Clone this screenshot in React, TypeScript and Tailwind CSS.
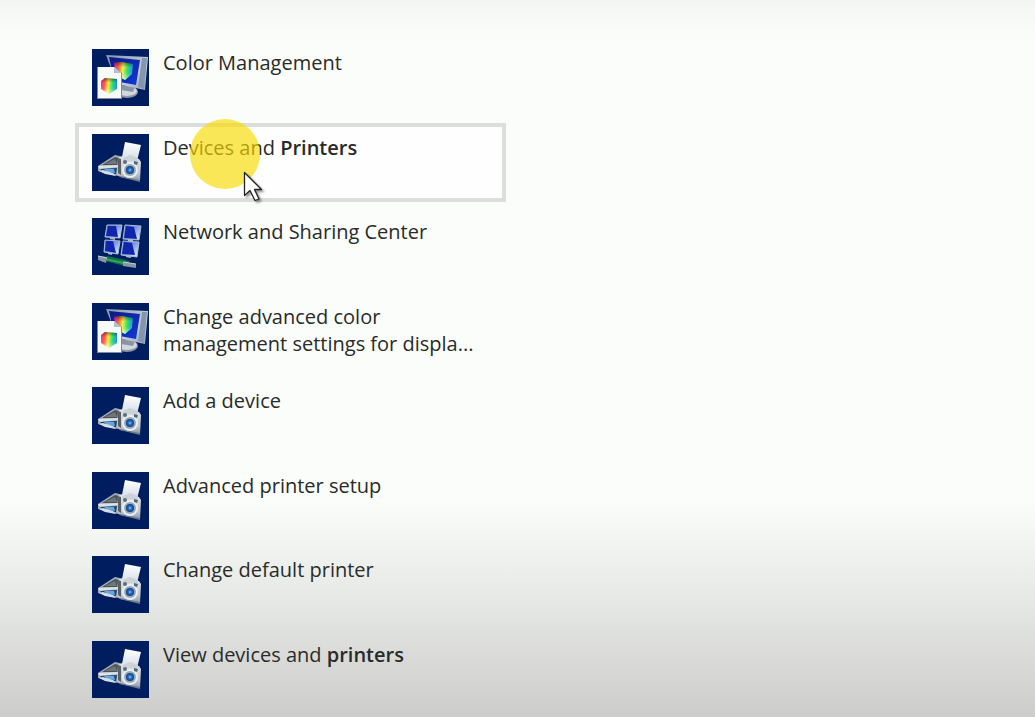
import { useState, type ReactNode } from 'react';

function ColorIcon() {
  return (
    <svg viewBox="0 0 57 57" className="w-[57px] h-[57px] shrink-0" aria-hidden="true">
      <defs>
        <linearGradient id="hue" x1="0" y1="0.4" x2="1" y2="0.5">
          <stop offset="0" stopColor="#f02fb8" />
          <stop offset="0.2" stopColor="#ff5a3c" />
          <stop offset="0.45" stopColor="#fff04a" />
          <stop offset="0.7" stopColor="#2fe36a" />
          <stop offset="1" stopColor="#1590ff" />
        </linearGradient>
        <linearGradient id="cubeLight" x1="0" y1="0" x2="0" y2="1">
          <stop offset="0" stopColor="#000" stopOpacity="0.45" />
          <stop offset="0.3" stopColor="#000" stopOpacity="0" />
          <stop offset="0.7" stopColor="#fff" stopOpacity="0.1" />
          <stop offset="1" stopColor="#fff" stopOpacity="0.6" />
        </linearGradient>
        <linearGradient id="colorScreen" x1="0" y1="0" x2="1" y2="1">
          <stop offset="0" stopColor="#0a1a7c" />
          <stop offset="1" stopColor="#1238dd" />
        </linearGradient>
        <linearGradient id="bezel" x1="0" y1="0" x2="1" y2="1">
          <stop offset="0" stopColor="#7f93b0" />
          <stop offset="0.6" stopColor="#c5cfdc" />
          <stop offset="1" stopColor="#9aa7b9" />
        </linearGradient>
      </defs>
      <rect width="57" height="57" fill="#001d60" />
      <ellipse cx="35" cy="43" rx="11" ry="6" fill="#8b97a6" />
      <ellipse cx="35" cy="42" rx="10" ry="5" fill="#d3d8de" />
      <path d="M29 36l14 2-2 5-12-2z" fill="#8995a7" />
      <path d="M14 6l42 2-3 33-28-6z" fill="url(#bezel)" />
      <path d="M50 9l5 0-3 31-6-2z" fill="#8696ac" />
      <path d="M17 8l31 3-4 25-22-4z" fill="url(#colorScreen)" />
      <path d="M22 14l7-1 12 2-1 10-7 6-9-5z" fill="url(#hue)" />
      <path d="M22 14l7-1 12 2-1 10-7 6-9-5z" fill="url(#cubeLight)" />
      <path d="M5 18h18l7 6v26H5z" fill="#7f8b98" />
      <path d="M6 18h16l7 6v25H6z" fill="#f8faf9" />
      <path d="M22 18v6h7z" fill="#b5bfca" />
      <path d="M9 32l4-3 12 1v10l-8 5-8-5z" fill="url(#hue)" />
      <path d="M9 32l4-3 12 1v10l-8 5-8-5z" fill="url(#cubeLight)" />
    </svg>
  );
}

function PrinterIcon() {
  return (
    <svg viewBox="0 0 57 57" className="w-[57px] h-[57px] shrink-0" aria-hidden="true">
      <defs>
        <linearGradient id="sheet" x1="0" y1="0" x2="0" y2="1">
          <stop offset="0" stopColor="#ffffff" />
          <stop offset="1" stopColor="#d3dce8" />
        </linearGradient>
        <linearGradient id="camera" x1="0" y1="0" x2="0" y2="1">
          <stop offset="0" stopColor="#e2e6e8" />
          <stop offset="0.7" stopColor="#c0c7cd" />
          <stop offset="1" stopColor="#8d99a7" />
        </linearGradient>
        <radialGradient id="lens">
          <stop offset="0" stopColor="#8fd0ff" />
          <stop offset="0.4" stopColor="#2a72c4" />
          <stop offset="1" stopColor="#123b7a" />
        </radialGradient>
      </defs>
      <rect width="57" height="57" fill="#001d60" />
      <path d="M33 8l16 3-4 16-15-4z" fill="url(#sheet)" />
      <path d="M6 32l17-11 9 2 1 20-13-2-14-4z" fill="#a3acb4" />
      <path d="M10 31l13-8 4 1v7z" fill="#4b5258" />
      <path d="M13 30l10-5 2 5z" fill="#70777c" />
      <path d="M6 32l20-1 1 2-19 2z" fill="#dde3e5" />
      <path d="M8 35l17-1-1 6-12-1z" fill="#1b447a" />
      <path d="M12 35l10 0 1 4-8-1z" fill="#65a9dc" />
      <path d="M7 37l4-1 10 3 3 3-11-2z" fill="#d5dee4" />
      <path d="M26 24l5-2 16 3 2 3-1 19-20-4-3-3z" fill="url(#camera)" />
      <path d="M26 24l3 1 0 16-3-2z" fill="#5a6065" />
      <path d="M31 24l7-3 8 3v3H31z" fill="#cbd1d4" />
      <path d="M28 42l20 4 0 2-20-5z" fill="#6e7b88" />
      <circle cx="38" cy="36" r="8" fill="#eaeef0" />
      <circle cx="38" cy="36" r="6" fill="#94a9bc" />
      <circle cx="38" cy="36" r="4" fill="url(#lens)" />
      <circle cx="33" cy="28" r="2" fill="#596d82" />
      <path d="M42 27l4 1-1 3-3-1z" fill="#4e6785" />
    </svg>
  );
}

function NetworkIcon() {
  return (
    <svg viewBox="0 0 57 57" className="w-[57px] h-[57px] shrink-0" aria-hidden="true">
      <defs>
        <linearGradient id="netScreen" x1="0" y1="0" x2="1" y2="1">
          <stop offset="0" stopColor="#3a53c8" />
          <stop offset="0.4" stopColor="#6f8ae6" />
          <stop offset="0.8" stopColor="#c4d4fa" />
          <stop offset="1" stopColor="#e9f1ff" />
        </linearGradient>
      </defs>
      <rect width="57" height="57" fill="#001d60" />
      <g fill="url(#netScreen)" stroke="#a9bccf" strokeWidth="1">
        <path d="M15 7l15 0-2 13-15-1z" />
        <path d="M33 7l16 1-2 14-16-1z" />
        <path d="M13 22l15 1-2 13-14-2z" />
        <path d="M31 23l16 1-2 15-16-2z" />
      </g>
      <g fill="#0f25ab">
        <path d="M16 8l8 0 2 11-12-1z" />
        <path d="M34 8l8 1 3 12-13-1z" />
        <path d="M14 23l7 0 3 12-11-2z" />
        <path d="M32 24l8 1 3 12-13-1z" />
      </g>
      <path d="M18 20l5 1M36 22l5 1M16 35l4 1M34 38l5 1" stroke="#a9b9c9" strokeWidth="2" />
      <path d="M15 38l23 5-5 5-20-5z" fill="#117343" />
      <path d="M13 41l23 5" stroke="#2da765" strokeWidth="2" />
      <path d="M6 38l9 1-1 6-8-3z" fill="#8797a2" />
      <path d="M6 38l9 2" stroke="#c6d3da" strokeWidth="1" />
      <path d="M31 44l13 2 0 4-13-2z" fill="#8797a2" />
      <path d="M31 44l13 2" stroke="#c6d3da" strokeWidth="1" />
    </svg>
  );
}

function Pointer() {
  return (
    <>
      <span className="absolute left-[115px] -top-1 w-[70px] h-[70px] rounded-full bg-[#fada00]/65 pointer-events-none" />
      <svg
        viewBox="0 0 22 32"
        className="absolute left-[168px] top-12 w-[22px] h-8 pointer-events-none drop-shadow-[2px_2px_1px_rgba(0,0,0,0.4)]"
        aria-hidden="true"
      >
        <path
          d="M1.5 1.5v23l5.5-5 5 10 4-1.5-4.500-9.500h7z"
          fill="#fff"
          stroke="#222"
          strokeWidth="1.300"
          strokeLinejoin="round"
        />
      </svg>
    </>
  );
}

type Result = { id: string; icon: () => ReactNode; label: ReactNode };

const results: Result[] = [
  { id: 'color', icon: ColorIcon, label: 'Color Management' },
  { id: 'devices', icon: PrinterIcon, label: <>Devices and <b className="font-semibold">Printers</b></> },
  { id: 'network', icon: NetworkIcon, label: 'Network and Sharing Center' },
  { id: 'display', icon: ColorIcon, label: <>Change advanced color<br />management settings for displa...</> },
  { id: 'add', icon: PrinterIcon, label: 'Add a device' },
  { id: 'setup', icon: PrinterIcon, label: 'Advanced printer setup' },
  { id: 'default', icon: PrinterIcon, label: 'Change default printer' },
  { id: 'view', icon: PrinterIcon, label: <>View devices and <b className="font-semibold">printers</b></> },
];

function App() {
  const [selected, setSelected] = useState('devices');

  return (
    <main className="min-h-screen flex flex-col bg-linear-to-b from-[#f3f5f3] via-[#fbfdfa] via-5% to-[#fbfdfa] to-70% font-['Open_Sans','Noto_Sans',sans-serif]">
      <div className="grow flex flex-col pl-[75px] pr-4 pt-[38px] pb-2 bg-linear-to-b from-transparent from-70% via-[#e4e6e3] via-85% to-[#cdcdcb]">
        <ul className="grow flex flex-col justify-between w-full max-w-[431px]">
          {results.map(({ id, icon: Icon, label }) => (
            <li key={id} className="relative">
              <button
                type="button"
                onClick={() => setSelected(id)}
                className={`w-full flex items-start gap-[14px] border-4 px-[13px] py-[7px] text-left text-xl leading-[27px] text-[#292b29] ${
                  selected === id ? 'border-[#dcdedb] bg-[#fdfefd]' : 'border-transparent'
                }`}
              >
                <Icon />
                <span className="whitespace-nowrap">{label}</span>
              </button>
              {id === 'devices' && <Pointer />}
            </li>
          ))}
        </ul>
      </div>
    </main>
  );
}

export default App;
